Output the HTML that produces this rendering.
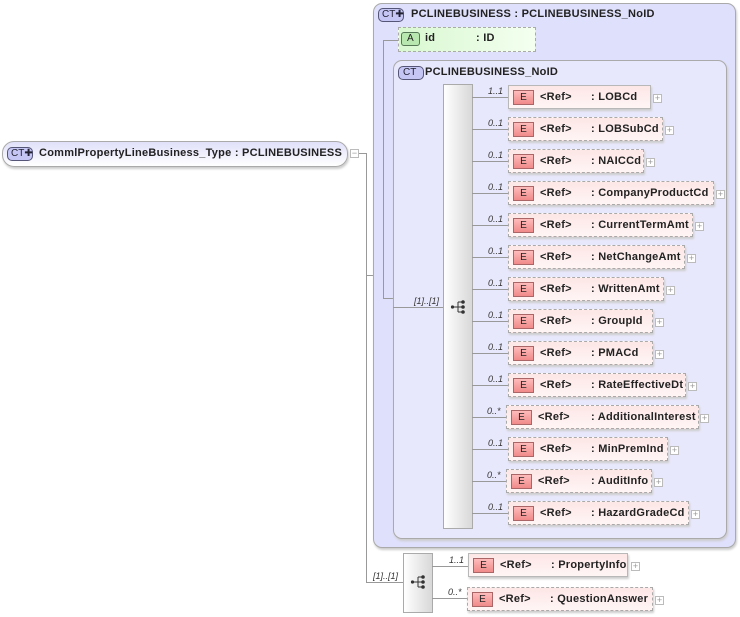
<!DOCTYPE html>
<html><head><meta charset="utf-8"><style>
*{margin:0;padding:0;box-sizing:border-box}
body{width:740px;height:617px;background:#fff;position:relative;overflow:hidden;font-family:"Liberation Sans",sans-serif;font-size:11px;font-weight:bold;color:#222;letter-spacing:0.25px}
div,span,svg{position:absolute}
.l{background:#999}
.card{font-style:italic;font-weight:normal;font-size:9px;color:#333;letter-spacing:0}
.el{height:24px;background:linear-gradient(#fde6e6,#fff5f5);border:1px solid #b8b8b8;box-shadow:1px 2px 2px #ccc}
.el.d{border:1px dashed #aaa}
.eb{left:4px;top:4px;width:21px;height:15px;background:linear-gradient(#fbb,#f08a8a);border:1px solid #a66;font-weight:normal;font-size:10px;text-align:center;line-height:13px;color:#222;letter-spacing:0}
.ref{left:31px;top:5px}
.nm{top:5px}
.pl{width:9px;height:9px;border:1px solid #bbb;background:#fff;font-size:9px;line-height:7px;text-align:center;color:#999;font-weight:normal;letter-spacing:0}
.ct{width:26px;height:14px;border:1px solid #557;border-radius:5px;background:#c6c6f5;font-size:10px;font-weight:normal;line-height:12px;padding-left:3px;color:#223;letter-spacing:0}
</style></head><body>
<!-- root -->
<div style="left:2px;top:141px;width:346px;height:26px;border:1px solid #aaa;border-radius:12px;background:linear-gradient(#e0e0fa,#fff);box-shadow:1px 2px 2px #ccc"></div>
<div class="ct" style="left:7px;top:147px">CT✚</div>
<span style="left:39px;top:147px">CommlPropertyLineBusiness_Type : PCLINEBUSINESS</span>
<div class="pl" style="left:350px;top:149px;line-height:6px">−</div>
<div class="l" style="left:359px;top:153px;width:7px;height:1px"></div>
<div class="l" style="left:366px;top:153px;width:1px;height:429px"></div>
<div class="l" style="left:366px;top:275px;width:17px;height:1px"></div>
<!-- outer CT -->
<div style="left:373px;top:3px;width:363px;height:545px;border:1px solid #aaa;border-radius:9px;background:#dfe0fb;box-shadow:1px 2px 2px #ccc"></div>
<div class="ct" style="left:378px;top:8px">CT✚</div>
<span style="left:411px;top:8px">PCLINEBUSINESS : PCLINEBUSINESS_NoID</span>
<div class="l" style="left:383px;top:40px;width:1px;height:258px"></div>
<div class="l" style="left:383px;top:40px;width:15px;height:1px"></div>
<div class="l" style="left:383px;top:298px;width:10px;height:1px"></div>
<!-- attr -->
<div style="left:398px;top:27px;width:138px;height:25px;border:1px dashed #aaa;background:linear-gradient(90deg,#d8f8d0,#f4fff0)"></div>
<div style="left:401px;top:32px;width:19px;height:14px;border:1px solid #575;border-radius:3px;background:#b8e8b0;font-size:10px;font-weight:normal;text-align:center;line-height:12px">A</div>
<span style="left:425px;top:32px">id</span><span style="left:476px;top:32px">: ID</span>
<!-- inner CT -->
<div style="left:393px;top:60px;width:334px;height:479px;border:1px solid #aaa;border-radius:9px;background:#e8e8fc;box-shadow:1px 2px 2px #ccc"></div>
<div class="ct" style="left:398px;top:66px;padding-left:4px">CT</div>
<span style="left:425px;top:66px">PCLINEBUSINESS_NoID</span>
<div class="l" style="left:393px;top:307px;width:50px;height:1px"></div>
<span class="card" style="left:414px;top:296px">[1]..[1]</span>
<div style="left:443px;top:84px;width:30px;height:445px;border:1px solid #aaa;background:linear-gradient(90deg,#fff,#d8d8d8)"></div>
<svg style="left:450px;top:299px" width="16" height="16" viewBox="0 0 16 16"><g fill="#333" stroke="#333"><circle cx="2.5" cy="8" r="1.6" stroke="none"/><line x1="2.5" y1="8" x2="8" y2="8"/><line x1="8" y1="3" x2="8" y2="13"/><line x1="8" y1="3" x2="13" y2="3"/><line x1="8" y1="8" x2="13" y2="8"/><line x1="8" y1="13" x2="13" y2="13"/><circle cx="13" cy="3" r="1.8" stroke="none"/><circle cx="13" cy="8" r="1.8" stroke="none"/><circle cx="13" cy="13" r="1.8" stroke="none"/></g></svg>

<div class="l" style="left:472px;top:97px;width:36px;height:1px"></div><span class="card" style="left:488px;top:86px">1..1</span><div class="el" style="left:508px;top:85px;width:143px"><div class="eb">E</div><span class="ref">&lt;Ref&gt;</span><span class="nm" style="left:82px">: LOBCd</span></div><div class="pl" style="left:653px;top:94px">+</div>
<div class="l" style="left:472px;top:129px;width:36px;height:1px"></div><span class="card" style="left:488px;top:118px">0..1</span><div class="el d" style="left:508px;top:117px;width:155px"><div class="eb">E</div><span class="ref">&lt;Ref&gt;</span><span class="nm" style="left:82px">: LOBSubCd</span></div><div class="pl" style="left:665px;top:126px">+</div>
<div class="l" style="left:472px;top:161px;width:36px;height:1px"></div><span class="card" style="left:488px;top:150px">0..1</span><div class="el d" style="left:508px;top:149px;width:136px"><div class="eb">E</div><span class="ref">&lt;Ref&gt;</span><span class="nm" style="left:82px">: NAICCd</span></div><div class="pl" style="left:646px;top:158px">+</div>
<div class="l" style="left:472px;top:193px;width:36px;height:1px"></div><span class="card" style="left:488px;top:182px">0..1</span><div class="el d" style="left:508px;top:181px;width:206px"><div class="eb">E</div><span class="ref">&lt;Ref&gt;</span><span class="nm" style="left:82px">: CompanyProductCd</span></div><div class="pl" style="left:716px;top:190px">+</div>
<div class="l" style="left:472px;top:225px;width:36px;height:1px"></div><span class="card" style="left:488px;top:214px">0..1</span><div class="el d" style="left:508px;top:213px;width:185px"><div class="eb">E</div><span class="ref">&lt;Ref&gt;</span><span class="nm" style="left:82px">: CurrentTermAmt</span></div><div class="pl" style="left:695px;top:222px">+</div>
<div class="l" style="left:472px;top:257px;width:36px;height:1px"></div><span class="card" style="left:488px;top:246px">0..1</span><div class="el d" style="left:508px;top:245px;width:177px"><div class="eb">E</div><span class="ref">&lt;Ref&gt;</span><span class="nm" style="left:82px">: NetChangeAmt</span></div><div class="pl" style="left:687px;top:254px">+</div>
<div class="l" style="left:472px;top:289px;width:36px;height:1px"></div><span class="card" style="left:488px;top:278px">0..1</span><div class="el d" style="left:508px;top:277px;width:156px"><div class="eb">E</div><span class="ref">&lt;Ref&gt;</span><span class="nm" style="left:82px">: WrittenAmt</span></div><div class="pl" style="left:666px;top:286px">+</div>
<div class="l" style="left:472px;top:321px;width:36px;height:1px"></div><span class="card" style="left:488px;top:310px">0..1</span><div class="el d" style="left:508px;top:309px;width:145px"><div class="eb">E</div><span class="ref">&lt;Ref&gt;</span><span class="nm" style="left:82px">: GroupId</span></div><div class="pl" style="left:655px;top:318px">+</div>
<div class="l" style="left:472px;top:353px;width:36px;height:1px"></div><span class="card" style="left:488px;top:342px">0..1</span><div class="el d" style="left:508px;top:341px;width:145px"><div class="eb">E</div><span class="ref">&lt;Ref&gt;</span><span class="nm" style="left:82px">: PMACd</span></div><div class="pl" style="left:655px;top:350px">+</div>
<div class="l" style="left:472px;top:385px;width:36px;height:1px"></div><span class="card" style="left:488px;top:374px">0..1</span><div class="el d" style="left:508px;top:373px;width:178px"><div class="eb">E</div><span class="ref">&lt;Ref&gt;</span><span class="nm" style="left:82px">: RateEffectiveDt</span></div><div class="pl" style="left:688px;top:382px">+</div>
<div class="l" style="left:472px;top:417px;width:34px;height:1px"></div><span class="card" style="left:487px;top:406px">0..*</span><div class="el d" style="left:506px;top:405px;width:193px"><div class="eb">E</div><span class="ref">&lt;Ref&gt;</span><span class="nm" style="left:84px">: AdditionalInterest</span></div><div class="pl" style="left:700px;top:414px">+</div>
<div class="l" style="left:472px;top:449px;width:36px;height:1px"></div><span class="card" style="left:488px;top:438px">0..1</span><div class="el d" style="left:508px;top:437px;width:160px"><div class="eb">E</div><span class="ref">&lt;Ref&gt;</span><span class="nm" style="left:82px">: MinPremInd</span></div><div class="pl" style="left:670px;top:446px">+</div>
<div class="l" style="left:472px;top:481px;width:34px;height:1px"></div><span class="card" style="left:487px;top:470px">0..*</span><div class="el d" style="left:506px;top:469px;width:146px"><div class="eb">E</div><span class="ref">&lt;Ref&gt;</span><span class="nm" style="left:84px">: AuditInfo</span></div><div class="pl" style="left:654px;top:478px">+</div>
<div class="l" style="left:472px;top:513px;width:36px;height:1px"></div><span class="card" style="left:488px;top:502px">0..1</span><div class="el d" style="left:508px;top:501px;width:181px"><div class="eb">E</div><span class="ref">&lt;Ref&gt;</span><span class="nm" style="left:82px">: HazardGradeCd</span></div><div class="pl" style="left:691px;top:510px">+</div>

<!-- bottom seq -->
<div class="l" style="left:366px;top:582px;width:37px;height:1px"></div>
<span class="card" style="left:373px;top:571px">[1]..[1]</span>
<div style="left:403px;top:553px;width:30px;height:60px;border:1px solid #aaa;background:linear-gradient(90deg,#fff,#d8d8d8)"></div>
<svg style="left:410px;top:574px" width="16" height="16" viewBox="0 0 16 16"><g fill="#333" stroke="#333"><circle cx="2.5" cy="8" r="1.6" stroke="none"/><line x1="2.5" y1="8" x2="8" y2="8"/><line x1="8" y1="3" x2="8" y2="13"/><line x1="8" y1="3" x2="13" y2="3"/><line x1="8" y1="8" x2="13" y2="8"/><line x1="8" y1="13" x2="13" y2="13"/><circle cx="13" cy="3" r="1.8" stroke="none"/><circle cx="13" cy="8" r="1.8" stroke="none"/><circle cx="13" cy="13" r="1.8" stroke="none"/></g></svg>
<div class="l" style="left:432px;top:566px;width:36px;height:1px"></div><span class="card" style="left:449px;top:555px">1..1</span>
<div class="el" style="left:468px;top:553px;width:160px"><div class="eb">E</div><span class="ref">&lt;Ref&gt;</span><span class="nm" style="left:82px">: PropertyInfo</span></div><div class="pl" style="left:631px;top:562px">+</div>
<div class="l" style="left:432px;top:598px;width:35px;height:1px"></div><span class="card" style="left:448px;top:587px">0..*</span>
<div class="el d" style="left:467px;top:587px;width:186px"><div class="eb">E</div><span class="ref">&lt;Ref&gt;</span><span class="nm" style="left:82px">: QuestionAnswer</span></div><div class="pl" style="left:655px;top:596px">+</div>
</body></html>
